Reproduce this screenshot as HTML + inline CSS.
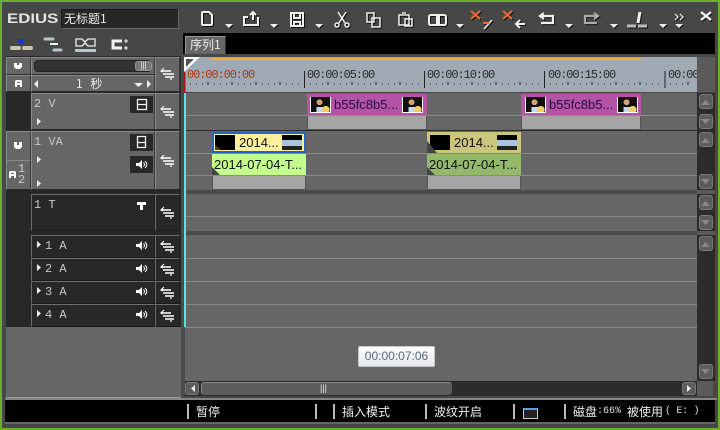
<!DOCTYPE html>
<html><head><meta charset="utf-8"><style>
html,body{margin:0;padding:0;width:720px;height:430px;overflow:hidden;background:#474747}
#r{position:relative;width:720px;height:430px;overflow:hidden;background:#474747;font-family:"Liberation Sans","WenQuanYi Zen Hei",sans-serif}
#r div{position:absolute;box-sizing:border-box}
.c{border-top:1px solid #8a8a8a;border-left:1px solid #8a8a8a;border-right:1px solid #3a3a3a;border-bottom:1px solid #2a2a2a;background:#666}
.d{border-top:1px solid #6e6e6e;border-left:1px solid #6e6e6e;border-right:1px solid #222;border-bottom:1px solid #1a1a1a;background:#282828}
.m{font:12px "Liberation Mono",monospace;color:#c8c8c8;white-space:pre;line-height:12px}
.z{font:12px "WenQuanYi Zen Hei","Noto Sans CJK SC",sans-serif;color:#eee;white-space:pre;line-height:14px}
.t{background:#666}
.l{background:#8a8a8a;height:1px;left:185px;width:512px}
.b{background:#5c5c5c;border:1px solid #7a7a7a;border-radius:3px;width:14px;height:15px;left:699px}
.s{background:#bbb;width:2px;height:15px;top:404px}
.k{background:#a5a5a5}
.p{width:21px;height:16px;top:97px;background:#fff}
.q{left:1px;top:0;right:1px;bottom:1px;background:radial-gradient(ellipse 3px 3px at 45% 35%,#d8a078 95%,transparent),radial-gradient(ellipse 4px 4px at 78% 85%,#f2d060 90%,transparent),linear-gradient(90deg,transparent 30%,#c4d8ea 30% 65%,transparent 65%) 0 10px/100% 5px no-repeat,#141010}
.cl{font:13px/14px "Liberation Sans",sans-serif;color:#111;white-space:pre}
.ru{top:69px;font:12px/12px 'Liberation Mono',monospace;color:#2a2a2a;white-space:pre;letter-spacing:-1.1px}
</style></head><body><div id="r">

<div style="left:0;top:0;width:720px;height:2px;background:#6bb02c"></div>
<div style="left:0;top:428px;width:720px;height:2px;background:#6bb02c"></div>
<div style="left:0;top:0;width:2px;height:430px;background:#6bb02c"></div>
<div style="left:718px;top:0;width:2px;height:430px;background:#6bb02c"></div>

<div style="left:7px;top:9px;font:bold 14px/18px 'Liberation Sans',sans-serif;color:#e4e4e4;transform:scaleX(1.2);transform-origin:0 0">EDIUS</div>
<div style="left:61px;top:9px;width:118px;height:20px;background:#272727;border:1px solid #1a1a1a;border-right-color:#666;border-bottom-color:#666"></div>
<div class="z" style="left:64px;top:12px">无标题1</div>

<div style="left:183px;top:33px;width:532px;height:21px;background:#000"></div>
<div style="left:185px;top:36px;width:41px;height:18px;background:#666;border-top:1px solid #999;border-left:1px solid #999;border-right:1px solid #333"></div>
<div class="z" style="left:190px;top:38px">序列1</div>

<div style="left:6px;top:56px;width:175px;height:342px;background:#282828"></div>
<div style="left:6px;top:327px;width:175px;height:71px;background:#666;border-bottom:1px solid #999"></div>
<div style="left:181px;top:56px;width:4px;height:344px;background:#4b4b4b"></div>

<div class="c" style="left:6px;top:57px;width:25px;height:18px"></div>
<div class="c" style="left:6px;top:75px;width:25px;height:17px"></div>
<div class="c" style="left:31px;top:57px;width:124px;height:18px"></div>
<div class="c" style="left:31px;top:75px;width:124px;height:17px"></div>
<div class="c" style="left:155px;top:57px;width:25px;height:35px"></div>
<div style="left:34px;top:60px;width:118px;height:12px;background:#333;border-radius:4px;border:1px solid #222"></div>
<div style="left:135px;top:61px;width:17px;height:10px;background:#777;border-radius:3px;border:1px solid #999;color:#eee;font:8px/8px 'Liberation Sans';text-align:center">|||</div>
<div class="z" style="left:76px;top:77px;color:#eee;word-spacing:5px">1 秒</div>

<div class="c" style="left:31px;top:93px;width:124px;height:37px"></div>
<div class="c" style="left:155px;top:93px;width:25px;height:37px"></div>
<div class="m" style="left:34px;top:98px">2 V</div>
<div style="left:130px;top:96px;width:23px;height:17px;background:#282828"></div>

<div class="c" style="left:6px;top:131px;width:25px;height:30px"></div>
<div class="c" style="left:6px;top:160px;width:25px;height:30px"></div>
<div class="c" style="left:31px;top:131px;width:124px;height:59px"></div>
<div class="c" style="left:155px;top:131px;width:25px;height:59px"></div>
<div class="m" style="left:34px;top:136px">1 VA</div>
<div style="left:130px;top:134px;width:23px;height:17px;background:#282828"></div>
<div style="left:130px;top:156px;width:23px;height:17px;background:#282828"></div>
<div class="m" style="left:18px;top:164px;line-height:11px;color:#ccc">1<br>2</div>

<div class="d" style="left:31px;top:194px;width:124px;height:37px"></div>
<div class="d" style="left:155px;top:194px;width:25px;height:37px"></div>
<div class="m" style="left:34px;top:199px">1 T</div>

<div class="d" style="left:31px;top:235px;width:124px;height:23px"></div>
<div class="d" style="left:155px;top:235px;width:25px;height:23px"></div>
<div class="d" style="left:31px;top:258px;width:124px;height:23px"></div>
<div class="d" style="left:155px;top:258px;width:25px;height:23px"></div>
<div class="d" style="left:31px;top:281px;width:124px;height:23px"></div>
<div class="d" style="left:155px;top:281px;width:25px;height:23px"></div>
<div class="d" style="left:31px;top:304px;width:124px;height:23px"></div>
<div class="d" style="left:155px;top:304px;width:25px;height:23px"></div>
<div class="m" style="left:45px;top:240px">1 A</div>
<div class="m" style="left:45px;top:263px">2 A</div>
<div class="m" style="left:45px;top:286px">3 A</div>
<div class="m" style="left:45px;top:309px">4 A</div>

<div style="left:185px;top:57px;width:512px;height:35px;background:#a0aab5"></div>
<div style="left:697px;top:57px;width:18px;height:35px;background:#5a5a5a"></div>
<div style="left:211px;top:58px;width:430px;height:2px;background:#f3ac3c"></div>
<div class="ru" style="left:187px;color:#a83a10">00:00:00:00</div>
<div class="ru" style="left:307px">00:00:05:00</div>
<div class="ru" style="left:427px">00:00:10:00</div>
<div class="ru" style="left:548px">00:00:15:00</div>
<div class="ru" style="left:668px;width:29px;overflow:hidden">00:00</div>

<div style="left:185px;top:93px;width:512px;height:37px" class="t"></div>
<div style="left:185px;top:131px;width:512px;height:59px" class="t"></div>
<div style="left:185px;top:194px;width:512px;height:37px" class="t"></div>
<div style="left:185px;top:235px;width:512px;height:146px" class="t"></div>
<div style="left:185px;top:130px;width:530px;height:1px;background:#2b2b2b"></div>
<div style="left:185px;top:190px;width:530px;height:4px;background:#4b4b4b"></div>
<div style="left:185px;top:231px;width:530px;height:4px;background:#4b4b4b"></div>
<div class="l" style="top:115px"></div>
<div class="l" style="top:153px"></div>
<div class="l" style="top:175px"></div>
<div class="l" style="top:216px"></div>
<div class="l" style="top:258px"></div>
<div class="l" style="top:281px"></div>
<div class="l" style="top:304px"></div>
<div class="l" style="top:327px"></div>
<div style="left:697px;top:93px;width:18px;height:288px;background:#2b2b2b"></div>
<div style="left:697px;top:190px;width:18px;height:4px;background:#5a5a5a"></div>
<div style="left:697px;top:231px;width:18px;height:4px;background:#5a5a5a"></div>
<div style="left:184px;top:93px;width:2px;height:234px;background:#54e6e0"></div>

<div style="left:307px;top:94px;width:120px;height:21px;background:#b354a7"></div>
<div class="k" style="left:307px;top:116px;width:120px;height:14px;border:1px solid #555;border-top:0"></div>
<div style="left:521px;top:94px;width:120px;height:21px;background:#b354a7"></div>
<div class="k" style="left:521px;top:116px;width:120px;height:14px;border:1px solid #555;border-top:0"></div>
<div class="p" style="left:310px"><div class="q"></div></div>
<div class="p" style="left:402px"><div class="q"></div></div>
<div class="p" style="left:525px"><div class="q"></div></div>
<div class="p" style="left:617px"><div class="q"></div></div>
<div class="cl" style="left:334px;top:98px;color:#2a0a40">b55fc8b5...</div>
<div class="cl" style="left:549px;top:98px;color:#2a0a40">b55fc8b5...</div>

<div style="left:212px;top:132px;width:94px;height:21px;background:#fdf09c;border:2px solid #2663c8"></div>
<div style="left:215px;top:135px;width:20px;height:15px;background:#000"></div>
<div style="left:282px;top:135px;width:20px;height:15px;background:linear-gradient(#000 0 5px,#a9c4de 5px 11px,#222 11px)"></div>
<div class="cl" style="left:239px;top:136px">2014...</div>
<div style="left:212px;top:154px;width:94px;height:21px;background:#c3fb8c"></div>
<div class="cl" style="left:214px;top:158px">2014-07-04-T...</div>
<div class="k" style="left:212px;top:176px;width:94px;height:14px;border:1px solid #555;border-top:0"></div>

<div style="left:427px;top:132px;width:94px;height:21px;background:#cbc67c"></div>
<div style="left:430px;top:135px;width:20px;height:15px;background:#000"></div>
<div style="left:497px;top:135px;width:20px;height:15px;background:linear-gradient(#000 0 5px,#a9c4de 5px 11px,#222 11px)"></div>
<div class="cl" style="left:454px;top:136px">2014...</div>
<div style="left:427px;top:154px;width:94px;height:21px;background:#93b96b"></div>
<div class="cl" style="left:429px;top:158px">2014-07-04-T...</div>
<div class="k" style="left:427px;top:176px;width:94px;height:14px;border:1px solid #555;border-top:0"></div>

<div class="b" style="top:94px"></div>
<div class="b" style="top:114px"></div>
<div class="b" style="top:132px"></div>
<div class="b" style="top:174px"></div>
<div class="b" style="top:195px"></div>
<div class="b" style="top:215px"></div>
<div class="b" style="top:236px"></div>
<div class="b" style="top:364px"></div>

<div style="left:185px;top:381px;width:512px;height:15px;background:#2b2b2b"></div>
<div style="left:185px;top:382px;width:14px;height:13px;background:#5c5c5c;border:1px solid #7a7a7a;border-radius:3px"></div>
<div style="left:201px;top:382px;width:251px;height:13px;background:#5c5c5c;border-top:1px solid #8c8c8c;border-left:1px solid #8c8c8c;border-radius:3px"></div>
<div style="left:682px;top:382px;width:14px;height:13px;background:#5c5c5c;border:1px solid #7a7a7a;border-radius:3px"></div>
<div style="left:697px;top:381px;width:16px;height:15px;background:#5a5a5a"></div>
<div style="left:320px;top:383px;color:#eee;font:9px/11px 'Liberation Sans'">|||</div>

<div style="left:358px;top:346px;width:77px;height:21px;background:linear-gradient(#fff,#e6e6f0);border:1px solid #c8c8c8;border-radius:2px;font:12px/19px 'Liberation Sans',sans-serif;color:#55677f;text-align:center">00:00:07:06</div>

<div style="left:5px;top:398px;width:712px;height:2px;background:#858585"></div>
<div style="left:5px;top:400px;width:710px;height:22px;background:#000"></div>
<div style="left:5px;top:422px;width:710px;height:2px;background:#666"></div>
<div class="s" style="left:187px"></div>
<div class="s" style="left:315px"></div>
<div class="s" style="left:333px"></div>
<div class="s" style="left:425px"></div>
<div class="s" style="left:513px"></div>
<div class="s" style="left:564px"></div>
<div class="z" style="left:196px;top:405px">暂停</div>
<div class="z" style="left:342px;top:405px">插入模式</div>
<div class="z" style="left:434px;top:405px">波纹开启</div>
<div class="z" style="left:573px;top:405px">磁盘</div>
<div class="z" style="left:597px;top:405px;font-family:'Liberation Mono',monospace;font-size:10px;color:#ddd">:66%</div>
<div class="z" style="left:627px;top:405px">被使用</div>
<div class="z" style="left:665px;top:405px;font-family:'Liberation Mono',monospace;font-size:10px;letter-spacing:-.3px;color:#ddd">( E: )</div>
<div style="left:523px;top:408px;width:15px;height:11px;background:#222;border:1px solid #ccc;border-top:2px solid #5a9ae8"></div>

<svg width="720" height="430" style="position:absolute;left:0;top:0" fill="none" stroke="#f0f0f0" stroke-width="2">
<defs>
<g id="sy"><path d="M161 1h10M163 4h11M165 7h9" stroke="#fff" stroke-width="1.6"/><path d="M164 -2l-3 3 2 1M171 8v2" stroke="#fff" stroke-width="1.2"/></g>
<g id="sp"><path d="M0 3h3l3-3v9l-3-3h-3z" fill="#fff" stroke="none"/><path d="M7.500 2.500q2 2 0 4M9 1q3.500 3.500 0 7" stroke="#fff" stroke-width="1"/></g>
</defs>
<g style="filter:drop-shadow(1px 1px 0 #111)">
<path d="M202 13q0-1 1-1h6l3 3v9q0 1-1 1h-8q-1 0-1-1z"/>
<path d="M248 17h-4v8h14v-8M253 20v-7M250 15l3-3 3 3"/>
<path d="M291 13h12v13h-12zM294 13v5h6v-5M294 26v-4h6v4"/>
<path d="M338 12l7 11M346 12l-7 11" stroke-width="1.5"/><circle cx="337" cy="25" r="2" stroke-width="1.5"/><circle cx="347" cy="25" r="2" stroke-width="1.5"/>
<path d="M367 13h7v9h-7zM372 18h8v9h-8z" stroke-width="1.5"/>
<path d="M399 15h10v10h-10zM402 13h4M405 19h7v7h-7z" stroke-width="1.5"/>
<path d="M437 15h-6q-2 0-2 2v6q0 2 2 2h6zM439 15h5q2 0 2 2v6q0 2-2 2h-5z"/>
<path d="M471 11l9 8M480 11l-9 8M503 11l9 8M512 11l-9 8" stroke="#ee6a30"/>
<path d="M484 29l8-9" stroke="#ccc"/><path d="M483 23h6" stroke="#ee6a30"/>
<path d="M525 24h-9M520 20l-4 4 4 4"/>
<path d="M544 13l-4 3 4 3M541 16h12v7h-12" stroke-width="2.2"/>
<path d="M594 13l4 3-4 3M597 16h-12v7h12" stroke="#aaa" stroke-width="2.2"/>
<path d="M640 12l-2 11" stroke-width="3"/><path d="M627 26h9M638 26h9" stroke="#bbb" stroke-width="3"/>
<path d="M675 14l3 3-3 3M680 14l3 3-3 3" stroke-width="1.2"/>
<path d="M701 12l10 8M711 12l-10 8" stroke-width="2.4"/>
<g fill="#eee" stroke="none">
<path d="M225 24h8l-4 4zM270 24h8l-4 4zM315 24h8l-4 4zM456 24h8l-4 4zM565 24h8l-4 4zM610 24h8l-4 4zM659 24h8l-4 4zM675 24h8l-4 4z"/>
</g>
</g>
<g fill="#eee" stroke="none">
<path d="M38 80v8l-4-4zM147 80v8l4-4zM134 83h9l-4.500 4zM37 118v7l4-3.500zM37 156v7l4-3.500zM37 180v7l4-3.500zM37 241v7l4-3.500zM37 264v7l4-3.500zM37 287v7l4-3.500zM37 310v7l4-3.500z"/>
<path d="M195 385v7l-4-3.500z"/>
<path d="M687 385v7l4-3.500z"/>
</g>
<g fill="#888" stroke="none">
<path d="M701 105h9l-4.500-5zM701 119h9l-4.500 5zM701 143h9l-4.500-5zM701 179h9l-4.500 5zM701 206h9l-4.500-5zM701 220h9l-4.500 5zM701 247h9l-4.500-5zM701 369h9l-4.500 5z"/>
</g>
<g stroke-width="1.3">
<path d="M137.500 99.500h9v10h-9zM137.500 104.500h9"/>
<path d="M137.500 136v12M145.500 136v12M137.500 136.500h8M137.500 142.500h8M137.500 147.500h8"/>
</g>
<use href="#sp" x="136" y="160"/>
<use href="#sp" x="136" y="241"/>
<use href="#sp" x="136" y="264"/>
<use href="#sp" x="136" y="287"/>
<use href="#sp" x="136" y="310"/>
<g fill="#fff" stroke="none">
<path d="M137 202h9v3h-3v5h-3v-5h-3z"/>
<path d="M14 63h3v2h2v-2h3v4l-2 2h-4l-2-2z"/>
<path d="M14 142h3v3h2v-3h3v5l-2 2h-4l-2-2z"/>
<path d="M16 80h5l1 1v6h-2v-2h-3v2h-2v-6zM17 82v1h3v-1z" fill-rule="evenodd"/>
<path d="M10 171h5l1 1v6h-2v-2h-3v2h-2v-6zM11 173v1h3v-1z" fill-rule="evenodd"/>
</g>
<use href="#sy" y="70"/>
<use href="#sy" y="108"/>
<use href="#sy" y="157"/>
<use href="#sy" y="209"/>
<use href="#sy" y="243"/>
<use href="#sy" y="266"/>
<use href="#sy" y="289"/>
<use href="#sy" y="312"/>
<path d="M12 48h7M24 48h7" stroke="#c8c8b0" stroke-width="4" stroke-linecap="round"/><path d="M17 39h8l-4 6z" fill="#1133ee" stroke="none"/>
<path d="M45 39h8M54 50h7" stroke="#b8c8c8" stroke-width="3" stroke-linecap="round"/><path d="M50 44h8" stroke-width="2"/>
<path d="M75 50.500h21" stroke="#b8c8c8" stroke-width="3"/><path d="M76 39h6l3 3 3-3h7v7h-7l-3-3-3 3h-6z" stroke-width="1.3"/>
<path d="M122 41h-9v7h9" stroke-width="3"/><path d="M124 41h4M126 39v4M124 48h4M126 46v4" stroke-width="1"/>
<path d="M184 72V57h16l-16 15z" fill="#fff" stroke="none"/><path d="M186 67V59h8z" fill="#555" stroke="none"/>
<path d="M184.500 72V93" stroke="#a01818"/>
<path d="M304.500 71V88M424.500 71V88M544.500 71V88M665 71V88" stroke="#222" stroke-width="1"/>
<path d="M190 84h1M196 84h1M202 84h1M208 82v3M214 84h1M220 84h1M226 84h1M232 82v3M238 84h1M244 84h1M250 84h1M256 82v3M262 84h1M268 84h1M274 84h1M280 82v3M286 84h1M292 84h1M298 84h1M310 84h1M316 84h1M322 84h1M328 82v3M334 84h1M340 84h1M346 84h1M352 82v3M358 84h1M364 84h1M370 84h1M376 82v3M382 84h1M388 84h1M394 84h1M400 82v3M406 84h1M412 84h1M418 84h1M430 84h1M436 84h1M442 84h1M448 82v3M454 84h1M460 84h1M466 84h1M472 82v3M478 84h1M484 84h1M490 84h1M496 82v3M502 84h1M508 84h1M514 84h1M520 82v3M526 84h1M532 84h1M538 84h1M550 84h1M556 84h1M562 84h1M568 82v3M574 84h1M580 84h1M586 84h1M592 82v3M598 84h1M604 84h1M610 84h1M616 82v3M622 84h1M628 84h1M634 84h1M640 82v3M646 84h1M652 84h1M658 84h1M670 84h1M676 84h1M682 84h1M688 82v3" stroke="#222" stroke-width="1"/>
<path d="M212 175v-8l8 8zM427 175v-8l8 8zM427 153v-12l10 12zM215 150v-5l6 5z" fill="#444" stroke="none"/>
</svg>
</div></body></html>
